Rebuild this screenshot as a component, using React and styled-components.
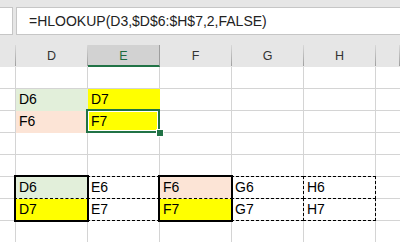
import React from "react";
import styled, { createGlobalStyle, css } from "styled-components";

const GlobalStyle = createGlobalStyle`
  body {
    margin: 0;
    font-family: "Liberation Sans", Arial, sans-serif;
    background: #fff;
  }
  * {
    box-sizing: border-box;
  }
`;

const GREEN = "#217346";
const FILLS = {
  green: "#e2efda",
  pink: "#fce4d6",
  yellow: "#ffff00",
};

const Sheet = styled.div`
  width: 400px;
  height: 242px;
  overflow: hidden;
  display: flex;
  flex-direction: column;
`;

const Top = styled.div`
  background: #e6e6e6;
  padding-top: 7px;
  display: flex;
  flex-direction: column;
  gap: 10px;
`;

const FormulaRow = styled.div`
  display: flex;
  gap: 3px;
  height: 28px;
`;

const NameBox = styled.div`
  width: 13px;
  background: #fff;
  border: 1px solid #c6c6c6;
  border-left: none;
`;

const FormulaBox = styled.div`
  flex: 1;
  background: #fff;
  border: 1px solid #c6c6c6;
  border-right: none;
  display: flex;
  align-items: center;
  padding-left: 12px;
  font-size: 14px;
  color: #222;
  white-space: nowrap;
`;

const columns = css`
  display: grid;
  grid-template-columns: 16px repeat(5, 72px) 1fr;
`;

const HeaderRow = styled.div`
  ${columns};
  height: 22px;
`;

const HeaderCell = styled.div`
  display: flex;
  align-items: center;
  justify-content: center;
  font-size: 12.5px;
  color: ${({ $active }) => ($active ? "#1e6b40" : "#333")};
  background: ${({ $active }) => ($active ? "#d2d2d2" : "#e6e6e6")};
  border-bottom: ${({ $active }) => ($active ? `2px solid ${GREEN}` : "1px solid #9e9e9e")};
  border-right: 1px solid;
  border-image: linear-gradient(#d8d8d8, #9e9e9e) 1;
  border-image-slice: 0 1 0 0;
  ${({ $active }) =>
    $active &&
    css`
      border-image: none;
      border-right: 1px solid #9e9e9e;
    `}
  padding-top: 1px;
`;

const Grid = styled.div`
  ${columns};
  grid-auto-rows: 22px;
`;

const edgeWidth = (e) => (e === "S" ? 2 : 1);
const edgeLine = (e) => (e ? `${edgeWidth(e)}px ${e === "S" ? "solid" : "dashed"} #000` : "none");
const edgeOffset = (e) => (e === "S" ? -2 : -1);

const Cell = styled.div`
  position: relative;
  display: flex;
  align-items: flex-end;
  padding: 0 0 3px 3px;
  font-size: 14px;
  color: #000;
  white-space: nowrap;
  background: ${({ $fill }) => ($fill ? FILLS[$fill] : "#fff")};
  border-right: 1px solid ${({ $fill }) => ($fill ? FILLS[$fill] : "#d4d4d4")};
  border-bottom: 1px solid ${({ $fill }) => ($fill ? FILLS[$fill] : "#d4d4d4")};

  ${({ $edges }) =>
    $edges &&
    css`
      &::after {
        content: "";
        position: absolute;
        z-index: ${Object.values($edges).includes("S") ? 2 : 1};
        top: ${edgeOffset($edges.t)}px;
        left: ${edgeOffset($edges.l)}px;
        right: ${edgeOffset($edges.r)}px;
        bottom: ${edgeOffset($edges.b)}px;
        border-top: ${edgeLine($edges.t)};
        border-left: ${edgeLine($edges.l)};
        border-right: ${edgeLine($edges.r)};
        border-bottom: ${edgeLine($edges.b)};
      }
    `}

  ${({ $selected }) =>
    $selected &&
    css`
      &::after {
        content: "";
        position: absolute;
        z-index: 3;
        top: -2px;
        left: -2px;
        right: -1px;
        bottom: -1px;
        border: 2px solid ${GREEN};
        box-shadow: inset 0 0 0 1px #fff;
      }
    `}
`;

const FillHandle = styled.span`
  position: absolute;
  z-index: 4;
  right: -4px;
  bottom: -4px;
  width: 6px;
  height: 6px;
  background: ${GREEN};
  outline: 1px solid #fff;
`;

const RowHead = styled.div`
  border-right: 1px solid #d4d4d4;
  border-bottom: 1px solid #d4d4d4;
`;

const Tail = styled.div`
  border-bottom: 1px solid #d4d4d4;
`;

const empty = () => [{}, {}, {}, {}, {}];

const rows = [
  empty(),
  [{ text: "D6", fill: "green" }, { text: "D7", fill: "yellow" }, {}, {}, {}],
  [{ text: "F6", fill: "pink" }, { text: "F7", fill: "yellow", selected: true }, {}, {}, {}],
  empty(),
  empty(),
  [
    { text: "D6", fill: "green", edges: { t: "S", l: "S", r: "S", b: "D" } },
    { text: "E6", edges: { t: "D", b: "D" } },
    { text: "F6", fill: "pink", edges: { t: "S", l: "S", r: "S", b: "D" } },
    { text: "G6", edges: { t: "D", r: "D", b: "D" } },
    { text: "H6", edges: { t: "D", r: "D", b: "D" } },
  ],
  [
    { text: "D7", fill: "yellow", edges: { l: "S", r: "S", b: "S" } },
    { text: "E7", edges: { b: "D" } },
    { text: "F7", fill: "yellow", edges: { l: "S", r: "S", b: "S" } },
    { text: "G7", edges: { r: "D", b: "D" } },
    { text: "H7", edges: { r: "D", b: "D" } },
  ],
  empty(),
];

export default function App() {
  return (
    <>
      <GlobalStyle />
      <Sheet>
        <Top>
          <FormulaRow>
            <NameBox />
            <FormulaBox>=HLOOKUP(D3,$D$6:$H$7,2,FALSE)</FormulaBox>
          </FormulaRow>
          <HeaderRow>
            <HeaderCell />
            {["D", "E", "F", "G", "H"].map((c) => (
              <HeaderCell key={c} $active={c === "E"}>
                {c}
              </HeaderCell>
            ))}
            <HeaderCell />
          </HeaderRow>
        </Top>
        <Grid>
          {rows.map((row, r) => (
            <React.Fragment key={r}>
              <RowHead />
              {row.map((cell, c) => (
                <Cell key={c} $fill={cell.fill} $edges={cell.edges} $selected={cell.selected}>
                  {cell.text}
                  {cell.selected && <FillHandle />}
                </Cell>
              ))}
              <Tail />
            </React.Fragment>
          ))}
        </Grid>
      </Sheet>
    </>
  );
}
